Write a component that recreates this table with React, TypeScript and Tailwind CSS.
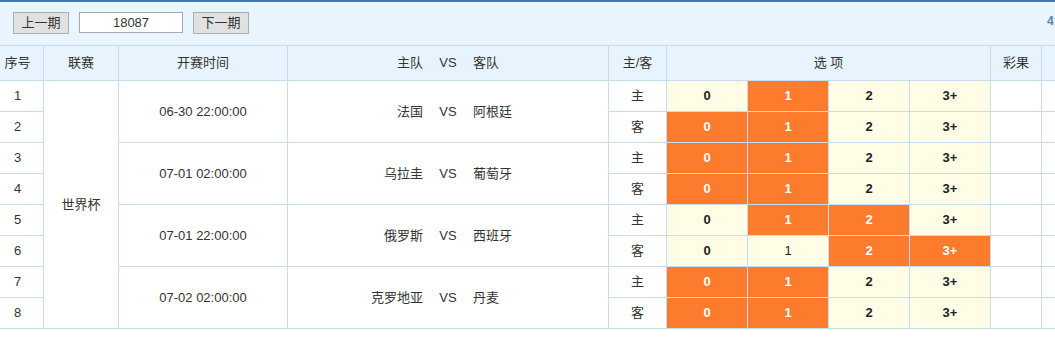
const font = { fontFamily: '"Liberation Sans", "Noto Sans CJK SC", sans-serif' };

type Match = { time: string; home: string; away: string; rows: [number[], number[]] };

const matches: Match[] = [
  { time: "06-30 22:00:00", home: "法国", away: "阿根廷", rows: [[1], [0, 1]] },
  { time: "07-01 02:00:00", home: "乌拉圭", away: "葡萄牙", rows: [[0, 1], [0, 1]] },
  { time: "07-01 22:00:00", home: "俄罗斯", away: "西班牙", rows: [[1, 2], [2, 3]] },
  { time: "07-02 02:00:00", home: "克罗地亚", away: "丹麦", rows: [[0, 1], [0, 1]] },
];

const opts = ["0", "1", "2", "3+"];
const bd = "border border-[#c8dcec]";

export default function App() {
  return (
    <div className="w-[1055px] h-[338px] overflow-hidden bg-white text-[13px] text-[#333]" style={font}>
      <div className="h-[2px] bg-[#3b78c3]" />
      <div className="h-[43px] bg-[#e9f5fd] flex items-start pt-[10px] pl-[13px] gap-[10px] relative">
        <button className="w-[56px] h-[22px] bg-[#e1e1e1] border border-[#adadad] text-[13px] text-[#333]">上一期</button>
        <input
          readOnly
          value="18087"
          className="w-[104px] h-[21px] bg-white border border-[#a8a8a8] text-center text-[13px] outline-none"
        />
        <button className="w-[56px] h-[22px] bg-[#e1e1e1] border border-[#adadad] text-[13px] text-[#333]">下一期</button>
        <span className="absolute left-[1047px] top-[10px] text-[12px] text-[#5b7fd0] font-bold">41</span>
      </div>
      <table className="border-collapse ml-[-9px] table-fixed" style={{ width: 1110 }}>
        <colgroup>
          <col style={{ width: 52 }} />
          <col style={{ width: 75 }} />
          <col style={{ width: 169 }} />
          <col style={{ width: 321 }} />
          <col style={{ width: 58 }} />
          <col style={{ width: 81 }} />
          <col style={{ width: 81 }} />
          <col style={{ width: 81 }} />
          <col style={{ width: 81 }} />
          <col style={{ width: 51 }} />
          <col style={{ width: 60 }} />
        </colgroup>
        <thead>
          <tr className="h-[35px] bg-[#e8f4fd]">
            <th className={`${bd} font-normal`}>序号</th>
            <th className={`${bd} font-normal`}>联赛</th>
            <th className={`${bd} font-normal`}>开赛时间</th>
            <th className={`${bd} font-normal`}>
              <div className="flex">
                <span className="flex-1 text-right">主队</span>
                <span className="w-[50px] text-center">VS</span>
                <span className="flex-1 text-left">客队</span>
              </div>
            </th>
            <th className={`${bd} font-normal`}>主/客</th>
            <th colSpan={4} className={`${bd} font-normal`}>选 项</th>
            <th className={`${bd} font-normal`}>彩果</th>
            <th className={`${bd} font-normal`}></th>
          </tr>
        </thead>
        <tbody>
          {matches.map((m, mi) =>
            m.rows.map((hits, ri) => (
              <tr key={`${mi}-${ri}`} className="h-[31px]">
                <td className={`${bd} text-center`}>{mi * 2 + ri + 1}</td>
                {mi === 0 && ri === 0 && (
                  <td rowSpan={8} className={`${bd} text-center`}>世界杯</td>
                )}
                {ri === 0 && (
                  <>
                    <td rowSpan={2} className={`${bd} text-center`}>{m.time}</td>
                    <td rowSpan={2} className={bd}>
                      <div className="flex">
                        <span className="flex-1 text-right">{m.home}</span>
                        <span className="w-[50px] text-center">VS</span>
                        <span className="flex-1 text-left">{m.away}</span>
                      </div>
                    </td>
                  </>
                )}
                <td className={`${bd} text-center`}>{ri === 0 ? "主" : "客"}</td>
                {opts.map((o, oi) => {
                  const hit = hits.includes(oi);
                  return (
                    <td
                      key={o}
                      className={`${bd} text-center font-bold ${hit ? "bg-[#fd7b2c] text-white" : "bg-[#fffde6] text-[#222]"} ${mi === 2 && ri === 1 && oi === 1 ? "font-normal" : ""}`}
                    >
                      {o}
                    </td>
                  );
                })}
                <td className={bd}></td>
                <td className={bd}></td>
              </tr>
            ))
          )}
        </tbody>
      </table>
    </div>
  );
}
